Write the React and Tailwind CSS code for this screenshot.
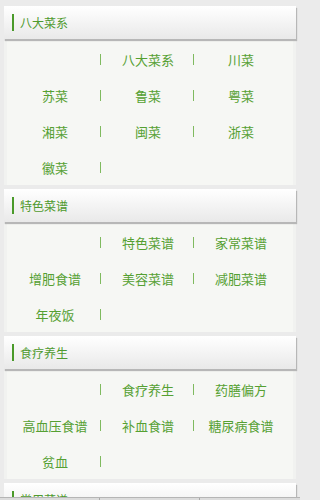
import React from "react";

const sections = [
  { title: "八大菜系", items: ["", "八大菜系", "川菜", "苏菜", "鲁菜", "粤菜", "湘菜", "闽菜", "浙菜", "徽菜"] },
  { title: "特色菜谱", items: ["", "特色菜谱", "家常菜谱", "增肥食谱", "美容菜谱", "减肥菜谱", "年夜饭"] },
  { title: "食疗养生", items: ["", "食疗养生", "药膳偏方", "高血压食谱", "补血食谱", "糖尿病食谱", "贫血"] },
  { title: "常用菜谱", items: [] },
];

function Header({ title }) {
  return (
    <div className="mx-[4px] h-[35px] flex items-start">
      <div className="w-full h-[33px] flex items-center bg-gradient-to-b from-[#ffffff] to-[#e9e9e9] shadow-[1px_2px_1px_rgba(0,0,0,0.22)]">
        <span className="ml-[8px] w-[2px] h-[17px] bg-[#4a9a2a]" />
        <span className="ml-[6px] text-[12px] leading-none text-[#4f9a2e]">{title}</span>
      </div>
    </div>
  );
}

function Body({ items }) {
  return (
    <div className="mx-[4px] bg-[#f6f7f4] border-x-[3px] border-[#f1f2f0] pl-[3.5px]">
      <div className="grid grid-cols-[93px_93px_93px]">
        {items.map((it, i) => (
          <div key={i} className="h-[36px] flex items-center">
            <span className="w-[89px] text-center text-[13px] leading-none text-[#55a032]">{it}</span>
            {i % 3 !== 2 && <span className="w-px h-[11px] bg-[#7fba5f]" />}
          </div>
        ))}
      </div>
    </div>
  );
}

export default function App() {
  return (
    <div
      className="w-full h-screen overflow-hidden bg-[#ebebeb]"
      style={{ fontFamily: '"Noto Sans CJK SC", "Noto Sans", sans-serif' }}
    >
      <div className="relative w-[300px] h-[500px] overflow-hidden pt-[6px]">
        {sections.map((s, idx) => (
          <div key={idx} className="mb-[4px]">
            <Header title={s.title} />
            {s.items.length > 0 && <Body items={s.items} />}
          </div>
        ))}
        <div className="absolute left-0 right-0 top-[497px] h-[3px] bg-[#dcdcdc] border-t border-[#b5b5b5] flex">
          <div className="w-[100px] border-r border-[#a9a9a9]" />
          <div className="w-[100px] border-r border-[#a9a9a9]" />
          <div className="flex-1" />
        </div>
      </div>
    </div>
  );
}
